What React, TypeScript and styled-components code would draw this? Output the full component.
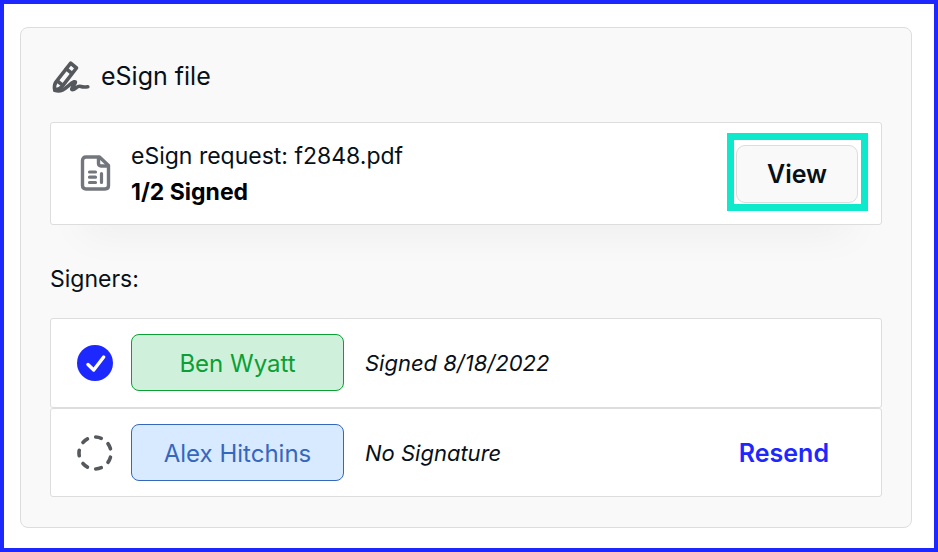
import React from "react";
import styled, { createGlobalStyle } from "styled-components";

const GlobalStyle = createGlobalStyle`
  * { box-sizing: border-box; }
  body {
    margin: 0;
    background: #ffffff;
    color: #071018;
    font-family: Inter, "Liberation Sans", sans-serif;
    font-optical-sizing: none;
  }
`;

const Page = styled.main`
  min-height: 100vh;
  border: 4px solid #1d28ff;
  padding: 23px 22px 20px 16px;
`;

const Card = styled.section`
  border: 1px solid #dddddd;
  border-radius: 8px;
  background: #f9f9f9;
  padding: 28px 29px 30px;
`;

const Header = styled.header`
  display: flex;
  align-items: center;
  gap: 10px;
  height: 40px;
  margin-bottom: 26px;
`;

const Title = styled.h1`
  margin: 0;
  font-size: 25px;
  font-weight: 400;
  line-height: 36px;
`;

const Panel = styled.div`
  display: flex;
  align-items: center;
  border: 1px solid #dddddd;
  border-radius: 3px;
  background: #ffffff;
`;

const RequestPanel = styled(Panel)`
  padding: 10px 13px 13px 26px;
  box-shadow: 0 40px 40px -32px rgba(0, 0, 0, 0.05);
`;

const IconSlot = styled.div`
  display: flex;
  flex: none;
  justify-content: center;
  width: 36px;
  margin-right: 18px;
`;

const RequestText = styled.div`
  flex: 1;
  padding-top: 4px;
  font-size: 23px;
  line-height: 36px;
`;

const RequestLine = styled.p<{ $strong?: boolean }>`
  margin: 0;
  color: ${(p) => (p.$strong ? "#000000" : "inherit")};
  font-weight: ${(p) => (p.$strong ? 700 : 400)};
`;

const Highlight = styled.div`
  border: 7px solid #0ee8cb;
  padding: 5px 3px 1px 2px;
`;

const ViewButton = styled.button`
  display: block;
  width: 122px;
  height: 58px;
  border: 1px solid #dddddd;
  border-radius: 9px;
  background: #f9f9f9;
  color: #071018;
  font-family: inherit;
  font-size: 25px;
  font-weight: 600;
  cursor: pointer;
`;

const SignersLabel = styled.h2`
  margin: 36px 0 21px;
  font-size: 23px;
  font-weight: 400;
  line-height: 36px;
`;

const SignerList = styled.ul`
  margin: 0;
  padding: 0;
  list-style: none;
`;

const SignerRow = styled(Panel).attrs({ as: "li" })`
  padding: 15px 26px;

  &:first-child {
    padding-bottom: 16px;
  }
`;

const NamePill = styled.span<{ $signed: boolean }>`
  flex: none;
  width: 213px;
  border: 1px solid ${(p) => (p.$signed ? "#0b9f35" : "#3567bd")};
  border-radius: 8px;
  background: ${(p) => (p.$signed ? "#cff1dc" : "#d8eaff")};
  color: ${(p) => (p.$signed ? "#0b9f35" : "#3567bd")};
  padding-top: 2px;
  font-size: 24px;
  line-height: 53px;
  text-align: center;
`;

const Status = styled.em`
  flex: 1;
  margin-left: 21px;
  font-size: 22px;
  line-height: 32px;
`;

const ResendButton = styled.button`
  border: 0;
  padding: 0 26px;
  background: none;
  color: #1d28ff;
  font-family: inherit;
  font-size: 25px;
  font-weight: 600;
  line-height: 36px;
  cursor: pointer;
`;

const SignIcon = () => (
  <svg width="41" height="40" viewBox="0 0 41 40" fill="none" stroke="#55585d" strokeWidth="3.6" strokeLinecap="round" strokeLinejoin="round" aria-hidden="true">
    <path d="M20.7 7.2 26.5 12 12.2 30.4Q9.3 34 4.8 34Q3.6 29.6 5.9 26Z" />
    <path d="M16.3 12.8 21.6 17.2M7.3 25 12.6 29.2" />
    <path d="M4.8 34.3C14 37.5 18 28.2 24.2 25.8C28.6 24.5 19.5 33.8 22.3 33.8C25.5 33.8 26.5 30.2 29.5 30.2C31.5 30.2 31 31.6 37.8 30.8" />
  </svg>
);

const FileIcon = () => (
  <svg width="36" height="40" viewBox="0 0 36 40" fill="none" stroke="#73777d" strokeWidth="3.4" strokeLinecap="round" strokeLinejoin="round" aria-hidden="true">
    <path d="M9 5H22.5L31.5 13.5V33.5Q31.5 37 28 37H9Q5.5 37 5.5 33.5V8.5Q5.5 5 9 5Z" />
    <path d="M21.5 5.5V11.5Q21.5 14 24 14H30.5" />
    <path d="M12.5 20H18.5M12.5 25.2H18.5M12.5 30.5H18.5M24.5 21.5V30.5" strokeWidth="3.2" />
  </svg>
);

const SignedIcon = () => (
  <svg width="36" height="36" viewBox="0 0 36 36" role="img" aria-label="Signed">
    <circle cx="18" cy="18" r="18" fill="#1d28ff" />
    <path d="M11 19.5 16.7 25 26.7 12" fill="none" stroke="#ffffff" strokeWidth="3.4" strokeLinecap="round" strokeLinejoin="round" />
  </svg>
);

const PendingIcon = () => (
  <svg width="36" height="36" viewBox="0 0 36 36" role="img" aria-label="Not signed">
    <circle cx="18" cy="18" r="16" pathLength="70" fill="none" stroke="#55585d" strokeWidth="3.6" strokeLinecap="round" strokeDasharray="4 6" strokeDashoffset="2" transform="rotate(180 18 18)" />
  </svg>
);

const signers = [
  { name: "Ben Wyatt", signed: true, status: "Signed 8/18/2022" },
  { name: "Alex Hitchins", signed: false, status: "No Signature" },
];

export default function App() {
  return (
    <>
      <GlobalStyle />
      <Page>
        <Card>
          <Header>
            <SignIcon />
            <Title>eSign file</Title>
          </Header>
          <RequestPanel>
            <IconSlot><FileIcon /></IconSlot>
            <RequestText>
              <RequestLine>eSign request: f2848.pdf</RequestLine>
              <RequestLine $strong>1/2 Signed</RequestLine>
            </RequestText>
            <Highlight>
              <ViewButton type="button">View</ViewButton>
            </Highlight>
          </RequestPanel>
          <SignersLabel>Signers:</SignersLabel>
          <SignerList>
            {signers.map((s) => (
              <SignerRow key={s.name}>
                <IconSlot>{s.signed ? <SignedIcon /> : <PendingIcon />}</IconSlot>
                <NamePill $signed={s.signed}>{s.name}</NamePill>
                <Status>{s.status}</Status>
                {!s.signed && <ResendButton type="button">Resend</ResendButton>}
              </SignerRow>
            ))}
          </SignerList>
        </Card>
      </Page>
    </>
  );
}
